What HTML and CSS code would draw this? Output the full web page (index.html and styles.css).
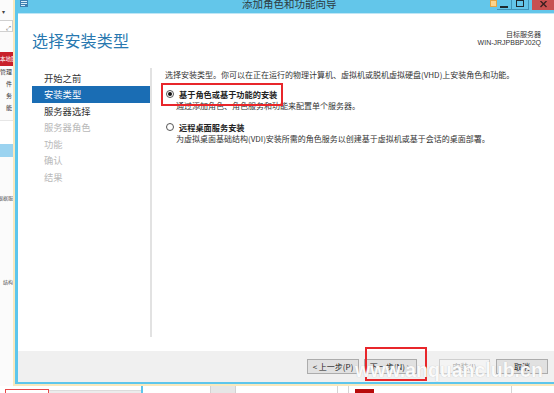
FILE: index.html
```html
<!DOCTYPE html>
<html lang="zh-CN">
<head>
<meta charset="utf-8">
<title>添加角色和功能向导</title>
<link rel="stylesheet" href="styles.css">
</head>
<body>
<div class="screen">
  <aside class="strip">
    <div class="s-caret">▾</div>
    <div class="s-box"><span class="s-arrow">⤢</span></div>
    <div class="s-red">本地服</div>
    <div class="s-item">管理</div>
    <div class="s-item">件</div>
    <div class="s-item">务</div>
    <div class="s-item">能</div>
    <div class="s-frame"></div>
    <div class="s-blue"></div>
    <div class="s-note n1">根据服</div>
    <div class="s-note n2">结构</div>
  </aside>

  <div class="frame">
    <div class="win">
      <header class="titlebar">
        <svg class="app-icon" width="8" height="7" viewBox="0 0 8 7">
          <rect x="0" y="0" width="8" height="7" fill="#3d7fb0"/>
          <rect x="1" y="1" width="6" height="1" fill="#d8ecf7"/>
          <rect x="1" y="3" width="6" height="1" fill="#d8ecf7"/>
          <rect x="1" y="5" width="4" height="1" fill="#d8ecf7"/>
        </svg>
        <div class="title">添加角色和功能向导</div>
        <div class="ctrls">
          <span class="c-yellow"></span>
          <span class="c-btn c-min"><i></i></span>
          <span class="c-btn c-max"><i></i></span>
          <span class="c-gap"></span>
          <span class="c-close">
            <svg width="7" height="7" viewBox="0 0 7 7"><path d="M0.5 0 L6.5 6 M6.5 0 L0.5 6" stroke="#3a2020" stroke-width="1.4"/></svg>
          </span>
        </div>
      </header>
      <div class="sep"></div>

      <main class="body">
        <div class="head">
          <h1 class="page-title">选择安装类型</h1>
          <div class="target">
            <div>目标服务器</div>
            <div>WIN-JRJPBBPJ02Q</div>
          </div>
        </div>

        <div class="main">
          <nav class="nav">
            <div class="nav-item">开始之前</div>
            <div class="nav-item active">安装类型</div>
            <div class="nav-item">服务器选择</div>
            <div class="nav-item off">服务器角色</div>
            <div class="nav-item off">功能</div>
            <div class="nav-item off">确认</div>
            <div class="nav-item off">结果</div>
          </nav>
          <div class="divider"></div>
          <section class="content">
            <p class="intro">选择安装类型。你可以在正在运行的物理计算机、虚拟机或脱机虚拟硬盘(VHD)上安装角色和功能。</p>

            <div class="option first">
              <div class="opt-row">
                <span class="radio checked"></span>
                <span class="opt-label">基于角色或基于功能的安装</span>
              </div>
              <div class="opt-desc">通过添加角色、角色服务和功能来配置单个服务器。</div>
              <div class="mark"></div>
            </div>

            <div class="option second">
              <div class="opt-row">
                <span class="radio"></span>
                <span class="opt-label">远程桌面服务安装</span>
              </div>
              <div class="opt-desc">为虚拟桌面基础结构(VDI)安装所需的角色服务以创建基于虚拟机或基于会话的桌面部署。</div>
            </div>
          </section>
        </div>
      </main>

      <footer class="buttons">
        <button class="btn b-prev">&lt; 上一步(P)</button>
        <button class="btn b-next">下一步(N) &gt;<span class="mark-next"></span></button>
        <button class="btn b-install" disabled>安装(I)</button>
        <button class="btn b-cancel">取消</button>
      </footer>
    </div>
  </div>

  <div class="taskbar">
    <span class="t-red"></span>
    <span class="t-gray"></span>
    <span class="t-blue"></span>
    <span class="t-block"></span>
    <span class="t-line l1"></span>
    <span class="t-line l2"></span>
    <span class="t-dark"></span>
    <span class="t-line l3"></span>
  </div>

  <div class="watermark">www.anquanclub.cn</div>
</div>
</body>
</html>
```

FILE: styles.css
```css
* { box-sizing: border-box; }

html, body {
  margin: 0;
  padding: 0;
  background: #ffffff;
}

body {
  width: 554px;
  height: 393px;
  overflow: hidden;
  font-family: "Noto Sans CJK SC", "Noto Sans", sans-serif;
  color: #333333;
}

.screen {
  position: relative;
  width: 554px;
  height: 393px;
  display: grid;
  grid-template-columns: 13px 541px;
  grid-template-rows: 386px 7px;
  overflow: hidden;
}

/* ---------- left strip (background app) ---------- */
.strip {
  grid-column: 1;
  grid-row: 1;
  background: #fbfbfb;
  display: flex;
  flex-direction: column;
  overflow: hidden;
  font-size: 6px;
  line-height: 12px;
  color: #333;
}
.s-caret {
  margin-top: 8px;
  height: 7px;
  line-height: 7px;
  font-size: 6px;
  padding-left: 2px;
  color: #444;
}
.s-box {
  margin-top: 5px;
  height: 12px;
  border: 1px solid #d0d0d0;
  border-left: none;
  background: #fff;
  display: flex;
  justify-content: flex-end;
  align-items: flex-end;
}
.s-arrow {
  font-size: 6px;
  line-height: 7px;
  color: #555;
  margin-right: 1px;
}
.s-red {
  margin-top: 20px;
  height: 14px;
  line-height: 14px;
  background: #c8202a;
  color: #ffffff;
  font-size: 5.5px;
  white-space: nowrap;
  overflow: hidden;
}
.s-item {
  height: 12px;
  line-height: 12px;
  display: flex;
  justify-content: flex-end;
  white-space: nowrap;
  padding-right: 1px;
  font-size: 6px;
}
.s-frame {
  margin-top: 6px;
  height: 24px;
  border-top: 1px solid #e6e6e6;
  background: #ffffff;
}
.s-blue {
  height: 13px;
  background: #9bd3f0;
}
.s-note {
  height: 8px;
  line-height: 8px;
  font-size: 5px;
  color: #555;
  white-space: nowrap;
  display: flex;
  justify-content: flex-end;
}
.n1 { margin-top: 37px; }
.n2 { margin-top: 76px; }

/* ---------- wizard window ---------- */
.frame {
  grid-column: 2;
  grid-row: 1;
  border-left: 2px solid #f8e9bd;
  border-bottom: 2px solid #f8e9bd;
  height: 386px;
}
.win {
  height: 100%;
  border-left: 3px solid #5dc6ec;
  border-bottom: 2px solid #5dc6ec;
  display: flex;
  flex-direction: column;
  background: #ffffff;
}

.titlebar {
  height: 13px;
  flex: none;
  background: #63c6ea;
  display: flex;
  align-items: flex-start;
  overflow: hidden;
}
.app-icon {
  display: block;
  margin-left: 2px;
  flex: none;
}
.title {
  margin-left: 214px;
  margin-top: -1px;
  font-size: 10.5px;
  line-height: 10px;
  color: #2e3a40;
  white-space: nowrap;
}
.ctrls {
  margin-left: auto;
  display: flex;
  align-items: flex-start;
  height: 10px;
}
.c-yellow {
  width: 7px;
  height: 7px;
  background: #fcd48c;
  border: 1px solid #e4a443;
}
.c-btn {
  height: 10px;
  border-right: 1px solid #3f94b8;
  border-bottom: 1px solid #3f94b8;
  position: relative;
}
.c-min { width: 15px; }
.c-max { width: 17px; }
.c-min i {
  position: absolute;
  left: 3px;
  top: 6px;
  width: 8px;
  height: 2px;
  background: #1d2a30;
}
.c-max i {
  position: absolute;
  left: 4px;
  top: -1px;
  width: 8px;
  height: 8px;
  border: 1px solid #1d2a30;
  border-top-width: 2px;
}
.c-gap { width: 3px; }
.c-close {
  width: 22px;
  height: 10px;
  background: #c75050;
  display: flex;
  justify-content: center;
  align-items: flex-start;
  padding-top: 1px;
}
.c-close svg { display: block; }

.sep {
  height: 1px;
  flex: none;
  background: #bfe6f5;
}

.body {
  flex: 1;
  display: flex;
  flex-direction: column;
  background: #ffffff;
}

.head {
  display: flex;
  justify-content: space-between;
  align-items: flex-start;
  padding: 18px 13px 0 14px;
}
.page-title {
  margin: 0;
  font-size: 16px;
  line-height: 17px;
  font-weight: 400;
  color: #2878b0;
  letter-spacing: 0.2px;
}
.target {
  margin-top: -1px;
  font-family: "Liberation Sans", "Noto Sans CJK SC", sans-serif;
  font-size: 7px;
  line-height: 8px;
  text-align: right;
  color: #333;
}

.main {
  flex: 1;
  margin-top: 19px;
  margin-bottom: 14px;
  display: grid;
  grid-template-columns: 132px 2px 1fr;
}

.nav {
  padding-left: 14px;
  padding-top: 1.75px;
}
.nav-item {
  height: 16.5px;
  line-height: 16.5px;
  padding-left: 12px;
  font-size: 9.3px;
  color: #333;
  white-space: nowrap;
}
.nav-item.active {
  background: #1a6db4;
  color: #ffffff;
}
.nav-item.off {
  color: #b8b8b8;
}

.divider {
  background: #e2e2e2;
}

.content {
  padding-left: 13px;
  padding-top: 2px;
  font-size: 8px;
}
.intro {
  margin: 0;
  line-height: 10px;
  white-space: nowrap;
}
.option {
  position: relative;
}
.option.first { margin-top: 7.5px; }
.option.second { margin-top: 9px; }
.opt-row {
  display: flex;
  align-items: center;
  height: 12px;
}
.radio {
  width: 8px;
  height: 8px;
  margin-left: 1px;
  border: 1px solid #555;
  border-radius: 50%;
  background: #fff;
  display: flex;
  align-items: center;
  justify-content: center;
  flex: none;
}
.radio.checked::after {
  content: "";
  width: 4px;
  height: 4px;
  border-radius: 50%;
  background: #111;
}
.opt-label {
  margin-left: 5px;
  font-size: 8.2px;
  line-height: 12px;
  font-weight: 700;
  color: #222;
  white-space: nowrap;
}
.opt-desc {
  padding-left: 11px;
  line-height: 12px;
  white-space: nowrap;
}
.mark {
  position: absolute;
  left: -4px;
  top: -4.5px;
  width: 122px;
  height: 23px;
  border: 2px solid #e8262b;
}

/* ---------- button bar ---------- */
.buttons {
  height: 31px;
  flex: none;
  background: #f0f0f0;
  display: flex;
  justify-content: flex-end;
  align-items: flex-start;
  padding: 8px 6px 0 0;
}
.btn {
  position: relative;
  height: 15px;
  padding: 0;
  margin: 0;
  border: 1px solid #acacac;
  background: #e1e1e1;
  font-family: "Noto Sans CJK SC", "Noto Sans", sans-serif;
  font-size: 8px;
  line-height: 13px;
  color: #222;
  text-align: center;
  white-space: nowrap;
}
.b-prev { width: 52px; }
.b-next { width: 53px; margin-left: 5px; }
.b-install {
  width: 51px;
  margin-left: 22px;
  background: #f4f4f4;
  border-color: #cfcfcf;
  color: #a8a8a8;
}
.b-cancel { width: 52px; margin-left: 6px; }
.mark-next {
  position: absolute;
  left: 0px;
  top: -13px;
  width: 62px;
  height: 34px;
  border: 2px solid #e8262b;
}

/* ---------- taskbar fragment ---------- */
.taskbar {
  grid-column: 1 / span 2;
  grid-row: 2;
  display: flex;
  align-items: flex-start;
  background: #ffffff;
  position: relative;
}
.taskbar span { display: block; flex: none; }
.t-red {
  margin-left: 5px;
  margin-top: 3px;
  width: 44px;
  height: 4px;
  border: 1px solid #e84848;
  border-bottom: none;
}
.t-gray {
  margin-top: 4px;
  width: 92px;
  height: 3px;
  background: #ececec;
  border-top: 1px solid #dcdcdc;
}
.t-blue {
  width: 2px;
  height: 7px;
  background: #5dc6ec;
}
.t-block {
  margin-left: 67px;
  width: 26px;
  height: 7px;
  background: #e6e6e6;
  border-left: 1px solid #d2d2d2;
  border-right: 1px solid #d2d2d2;
}
.t-line {
  width: 1px;
  height: 7px;
  background: #d4d4d4;
}
.l1 { margin-left: 101px; }
.l2 { margin-left: 10px; }
.t-dark {
  margin-left: 6px;
  margin-top: 3px;
  width: 19px;
  height: 4px;
  background: #b80c0c;
}
.l3 { margin-left: 137px; }

/* ---------- watermark ---------- */
.watermark {
  position: absolute;
  left: 355px;
  top: 360px;
  font-family: "Liberation Sans", Arial, sans-serif;
  font-weight: 700;
  font-size: 19.5px;
  line-height: 20px;
  color: rgba(255, 255, 255, 0.95);
  text-shadow: 0 0 1px rgba(150, 150, 150, 0.6);
  white-space: nowrap;
  pointer-events: none;
}
```
